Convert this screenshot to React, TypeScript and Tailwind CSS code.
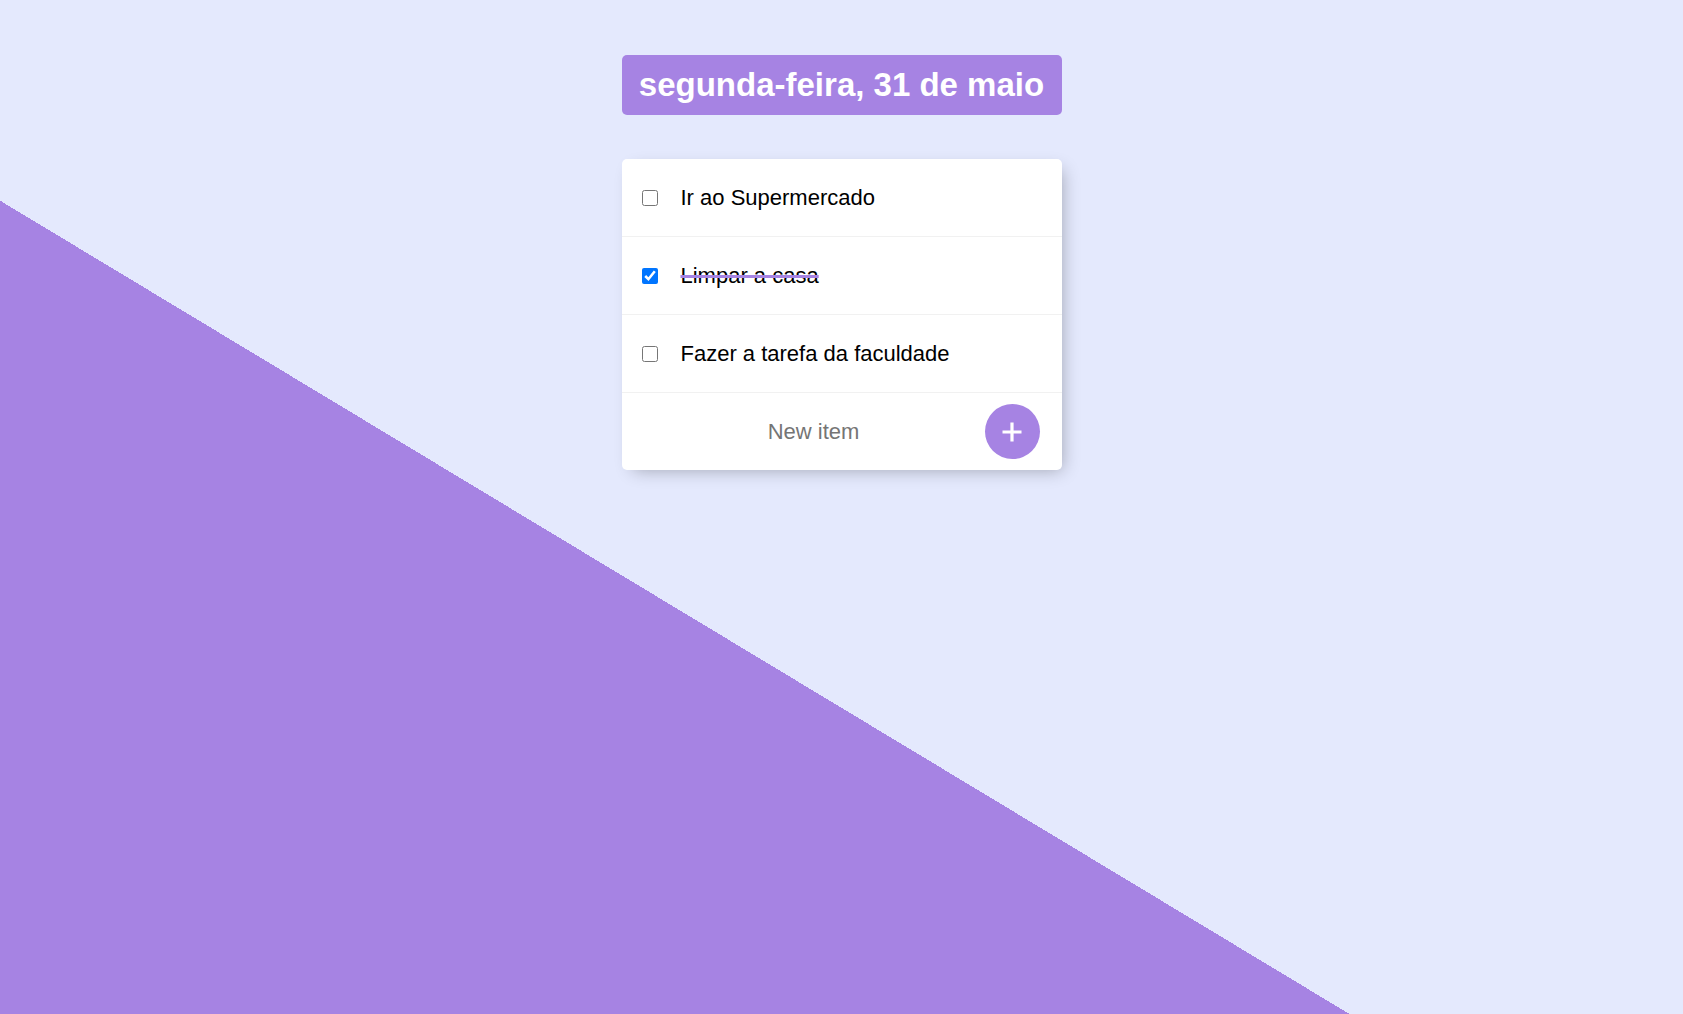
import React from "react";

const items = [
  { text: "Ir ao Supermercado", done: false },
  { text: "Limpar a casa", done: true },
  { text: "Fazer a tarefa da faculdade", done: false },
];

export default function App() {
  return (
    <div
      className="w-full h-screen overflow-hidden bg-[#e4e9fd] bg-[linear-gradient(31.08deg,#a683e3_40.1%,#e4e9fd_40.1%)] flex flex-col items-center"
      style={{ fontFamily: '"Liberation Sans", Arial, Helvetica, sans-serif' }}
    >
      <div className="mt-[55px] w-[440px] h-[60px] rounded-[5px] bg-[#a683e3] flex items-center justify-center">
        <h1 className="m-0 text-[33px] font-bold text-white leading-none -translate-y-px">segunda-feira, 31 de maio</h1>
      </div>

      <div className="mt-[44px] w-[440px] bg-white rounded-[5px] shadow-[5.5px_5.5px_16.5px_-5.5px_rgba(0,0,0,0.3)]">
        {items.map((it, i) => (
          <div key={i} className="h-[78px] flex items-center border-b border-[#f1f1f1]">
            <input
              type="checkbox"
              defaultChecked={it.done}
              className="m-0 ml-[20px] w-4 h-4 shrink-0"
            />
            <p
              className={
                "m-0 pl-[23px] text-[22px] text-[#000000] " +
                (it.done
                  ? "[text-decoration-line:line-through] [text-decoration-color:#a683e3] [text-decoration-thickness:3px]"
                  : "")
              }
            >
              {it.text}
            </p>
          </div>
        ))}
        <div className="h-[77px] flex items-center pl-[19px]">
          <input
            type="text"
            placeholder="New item"
            className="w-[344px] h-[66px] pl-[2px] text-center text-[22px] bg-transparent border-0 outline-none placeholder:text-[#757575]"
          />
          <button className="w-[55px] h-[55px] rounded-full bg-[#a683e3] flex items-center justify-center shrink-0">
            <svg width="20" height="20" viewBox="0 0 20 20">
              <path d="M10 0.5V19.5M0.5 10H19.5" stroke="#fff" strokeWidth="3.2" />
            </svg>
          </button>
        </div>
      </div>
    </div>
  );
}
